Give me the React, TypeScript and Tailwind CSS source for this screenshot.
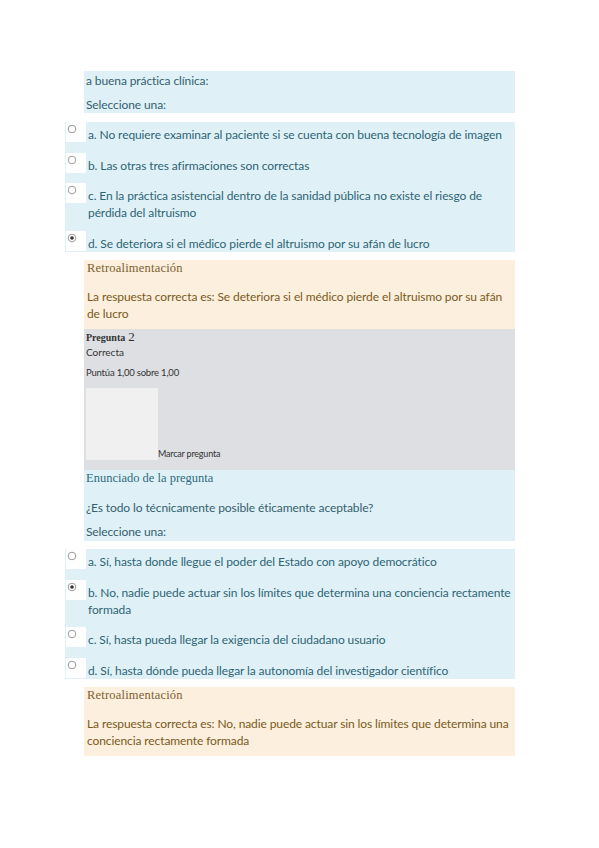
import React from "react";

const sans = { fontFamily: "Lato, 'Open Sans', sans-serif" };

function Radio({ checked }: { checked?: boolean }) {
  return (
    <div className="w-[20px] h-[20px] bg-white shrink-0 relative">
      <svg width="10" height="10" viewBox="0 0 10 10" className="absolute left-[1px] top-[2px]">
        <circle cx="5" cy="5" r="3.8" fill="#fff" stroke="#9a9a9a" strokeWidth="1" />
        {checked && <circle cx="5" cy="5" r="1.8" fill="#333" />}
      </svg>
    </div>
  );
}

function Option({ children, checked }: { children: React.ReactNode; checked?: boolean }) {
  return (
    <div className="flex items-start">
      <Radio checked={checked} />
      <div className="pt-[4px] pl-[2px] text-[12px] tracking-[-0.1px] leading-[17px] text-[#2f6474]">{children}</div>
    </div>
  );
}

function Options({ items, sel }: { items: string[]; sel: number }) {
  return (
    <div className="ml-[-19px] w-[450px] bg-[#dff1f7] flex flex-col gap-[9.5px] pl-[1px] pr-[3px] pb-[0.5px]" style={sans}>
      {items.map((t, i) => (
        <Option key={i} checked={i === sel}>
          {t}
        </Option>
      ))}
    </div>
  );
}

function Feedback({ text }: { text: string }) {
  return (
    <div className="w-[431px] bg-[#fcefdd] pl-[3px] pr-[6px] pb-[6.5px]">
      <div
        className="text-[12.5px] leading-[17px] text-[#7d5f30] tracking-[0.2px]"
        style={{ fontFamily: "'Liberation Serif', serif" }}
      >
        Retroalimentación
      </div>
      <div className="mt-[11.5px] text-[12px] tracking-[-0.1px] leading-[17px] text-[#7a5a22]" style={sans}>
        {text}
      </div>
    </div>
  );
}

export default function App() {
  return (
    <div className="w-[599px] min-h-[848px] bg-white pt-[71px] pl-[84px]">
      <div className="w-[431px] bg-[#dff1f7] pl-[2px] pt-[1px] text-[12px] tracking-[-0.1px]" style={sans}>
        <div className="leading-[17px] text-[#35606e]">a buena práctica clínica:</div>
        <div className="mt-[7px] leading-[17px] text-[#35606e]">Seleccione una:</div>
      </div>
      <div className="mt-[9px]">
        <Options
          sel={3}
          items={[
            "a. No requiere examinar al paciente si se cuenta con buena tecnología de imagen",
            "b. Las otras tres afirmaciones son correctas",
            "c. En la práctica asistencial dentro de la sanidad pública no existe el riesgo de pérdida del altruismo",
            "d. Se deteriora si el médico pierde el altruismo por su afán de lucro",
          ]}
        />
      </div>
      <div className="mt-[7.5px]">
        <Feedback text="La respuesta correcta es: Se deteriora si el médico pierde el altruismo por su afán de lucro" />
      </div>
      <div className="w-[431px] bg-[#dedfe3] pl-[2px] pt-[1px] pb-[10px] text-[#333]">
        <div className="leading-[14px] flex items-baseline gap-[3px]" style={{ fontFamily: "'Liberation Serif', serif" }}>
          <span className="text-[10px] font-bold">Pregunta</span>
          <span className="text-[13px]">2</span>
        </div>
        <div className="text-[10px] leading-[14px]" style={sans}>Correcta</div>
        <div className="mt-[7px] text-[9.5px] leading-[14px] tracking-[-0.2px]" style={sans}>Puntúa 1,00 sobre 1,00</div>
        <div className="mt-[8px] flex items-end">
          <div className="w-[72px] h-[72px] bg-[#f0f0f0]" />
          <div className="text-[9px] leading-[12px] tracking-[-0.2px]" style={sans}>Marcar pregunta</div>
        </div>
      </div>
      <div className="w-[431px] bg-[#dff1f7] pl-[2px] pb-[1.5px]">
        <div
          className="text-[12.5px] leading-[17px] text-[#2f6b7a]"
          style={{ fontFamily: "'Liberation Serif', serif" }}
        >
          Enunciado de la pregunta
        </div>
        <div className="mt-[12px] text-[12px] tracking-[-0.1px] leading-[17px] text-[#35606e]" style={sans}>
          ¿Es todo lo técnicamente posible éticamente aceptable?
        </div>
        <div className="mt-[7px] text-[12px] tracking-[-0.1px] leading-[17px] text-[#35606e]" style={sans}>
          Seleccione una:
        </div>
      </div>
      <div className="mt-[8px]">
        <Options
          sel={1}
          items={[
            "a. Sí, hasta donde llegue el poder del Estado con apoyo democrático",
            "b. No, nadie puede actuar sin los límites que determina una conciencia rectamente formada",
            "c. Sí, hasta pueda llegar la exigencia del ciudadano usuario",
            "d. Sí, hasta dónde pueda llegar la autonomía del investigador científico",
          ]}
        />
      </div>
      <div className="mt-[7.5px]">
        <Feedback text="La respuesta correcta es: No, nadie puede actuar sin los límites que determina una conciencia rectamente formada" />
      </div>
    </div>
  );
}
